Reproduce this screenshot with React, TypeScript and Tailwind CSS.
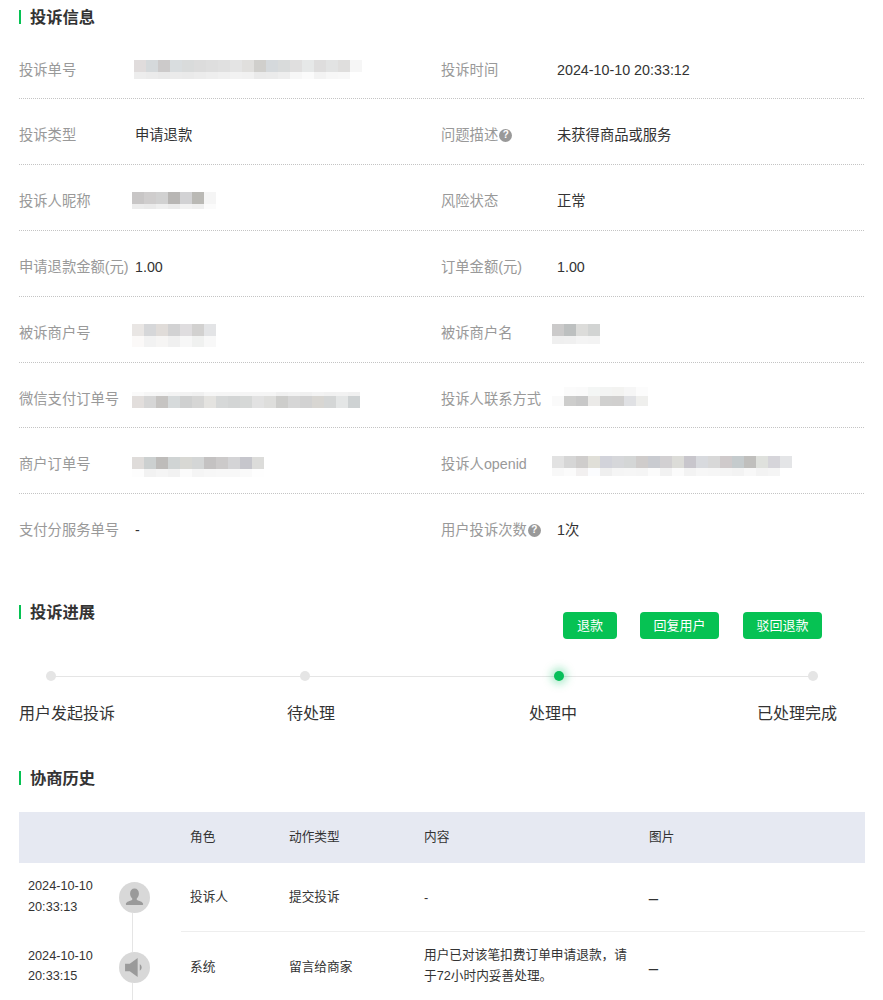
type MosaicData = {
  x: string;
  top: string[];
  bottom: string[];
  topH: string;
  bottomH: string;
};

const orderNo: MosaicData = {
  x: "-ml-px mt-0",
  topH: "h-3",
  bottomH: "h-[7px]",
  top: ["#e0dcdc", "#d5d9db", "#cccaca", "#d9dddf", "#d9dbdb", "#dcdcdc", "#dedede", "#e0e0e0", "#e4e4e4", "#e0dfdd", "#d0cfcc", "#d5d9dc", "#d9dbdb", "#e0dfdf", "#e6e8e8", "#dedddd", "#e2e3e3", "#dfdedd", "#f6f6f6"],
  bottom: ["#ededed", "#ebebeb", "#e9e9e9", "#ebebeb", "#eaeaea", "#ececec", "#eeeeee", "#f0f0f0", "#f2f2f2", "#f1f1f1", "#eaeaea", "#ebebeb", "#eeeeee", "#f7f7f7", "#fbfbfb", "#f3f3f3", "#f7f7f7", "#f8f8f8", "#ffffff"],
};
const nickname: MosaicData = {
  x: "-ml-[3px] mt-px",
  topH: "h-3",
  bottomH: "h-[5px]",
  top: ["#c8c6c6", "#cfcdcd", "#d1d1d1", "#b8b6b4", "#d2d2d4", "#bab9b5", "#f5f5f5"],
  bottom: ["#ececec", "#eaeaea", "#efefef", "#ebebeb", "#f2f2f2", "#efefef", "#fbfbfb"],
};
const merchantNo: MosaicData = {
  x: "-ml-[3px] mt-px",
  topH: "h-3",
  bottomH: "h-[11px]",
  top: ["#e9e6e4", "#d6d7d9", "#e0dcd9", "#d2d2d3", "#dfdddf", "#d2d1d0", "#e3e4e6"],
  bottom: ["#fbf9f8", "#f2f2f2", "#f6f5f4", "#f0f0f0", "#f7f7f7", "#f0f1f0", "#f8f8f8"],
};
const merchantName: MosaicData = {
  x: "-ml-[5px] mt-px",
  topH: "h-3",
  bottomH: "h-2",
  top: ["#cbcaca", "#bdc0c0", "#dcdcda", "#d2d4d3"],
  bottom: ["#efefef", "#f0f0f0", "#f4f4f4", "#f3f3f3"],
};
const wechatOrder: MosaicData = {
  x: "-ml-[3px] mt-[3px]",
  topH: "h-1",
  bottomH: "h-3",
  top: ["#fafafa", "#f6f6f6", "#f5f5f5", "#f3f3f3", "#f2f2f2", "#f0f0f0", "#f6f6f6", "#f5f5f5", "#f5f5f5", "#f5f5f5", "#f5f5f5", "#f5f5f5", "#f0f0f0", "#f2f2f2", "#f0f0f0", "#f3f3f3", "#f1f1f1", "#f2f2f2", "#f0f0f0"],
  bottom: ["#e2dedc", "#d6d6d6", "#c6c4c2", "#d6dadb", "#cfd0d0", "#d6d6d5", "#e4e3e0", "#d6d8d8", "#d3d5d5", "#d6d8d7", "#e2e2e2", "#dededc", "#cdcdcb", "#d6d6d6", "#d2d2d2", "#d8d6d2", "#d4d6d6", "#e4e6e6", "#ced2d3"],
};
const contact: MosaicData = {
  x: "-ml-[5px] -mt-0.5",
  topH: "h-[9px]",
  bottomH: "h-2.5",
  top: ["#ffffff", "#fbfbfb", "#fafafa", "#f4f6f5", "#f3f4f3", "#f3f3f1", "#f6f6f6", "#fcfcfc"],
  bottom: ["#fafafa", "#cdcdcc", "#c8c8c8", "#ebeae8", "#d0d0cf", "#d0cfce", "#e0e1e4", "#efefed"],
};
const merchantOrder: MosaicData = {
  x: "-ml-[3px] mt-[3px]",
  topH: "h-3",
  bottomH: "h-2",
  top: ["#dfdcda", "#ccd0d0", "#bebcba", "#d0d4d4", "#d8d8d4", "#d4d6d6", "#c4c2c2", "#cccaca", "#d4d4d6", "#c6c6cc", "#dcdcda"],
  bottom: ["#fdfdfd", "#f2f2f2", "#f5f5f5", "#f2f2f2", "#fbfbfb", "#f5f5f5", "#f7f7f7", "#f8f8f8", "#f8f8f8", "#fafafa", "#fefefe"],
};
const openid: MosaicData = {
  x: "-ml-[5px] mt-0.5",
  topH: "h-3",
  bottomH: "h-2",
  top: ["#e2e2e2", "#d6d6d6", "#cfcdcc", "#e0dfd8", "#d2d3da", "#d6d7da", "#d4d6d6", "#cfcccb", "#c9cbd0", "#d2d0d2", "#dcdcd8", "#c8c6cc", "#d8dade", "#d8d8d8", "#cfcacb", "#c5cbcd", "#c0bfbd", "#dfe1dd", "#d6d5da", "#e4e5e7"],
  bottom: ["#f8f8f8", "#fbfbfb", "#f2f0f0", "#fbfcfe", "#efefef", "#f5f5f5", "#f6f6f6", "#f5f5f5", "#fbfbfb", "#f2f2f2", "#fbfbfb", "#f3f3f3", "#f7f7f7", "#f6f6f6", "#f5f5f5", "#f3f3f3", "#f8f8f8", "#f3f3f3", "#f5f5f5", "#ffffff"],
};

function Mosaic({ data }: { data: MosaicData }) {
  return (
    <div className={data.x}>
      <div className={`flex ${data.topH}`}>
        {data.top.map((c, i) => (
          <div key={i} className="w-3 shrink-0" style={{ backgroundColor: c }} />
        ))}
      </div>
      <div className={`flex ${data.bottomH}`}>
        {data.bottom.map((c, i) => (
          <div key={i} className="w-3 shrink-0" style={{ backgroundColor: c }} />
        ))}
      </div>
    </div>
  );
}

function Title({ children }: { children: string }) {
  return (
    <h2 className="flex items-center h-5 text-[16.3px] font-bold text-[#333]">
      <span className="w-0.5 h-[14px] bg-[#06c253] mr-[9px]" />
      {children}
    </h2>
  );
}

function Help() {
  return (
    <span className="ml-px inline-flex items-center justify-center w-[13px] h-[13px] rounded-full bg-[#999] text-white text-[10px] font-bold leading-none">
      ?
    </span>
  );
}

function Cell({
  label,
  help,
  value,
  mosaic,
  wide,
}: {
  label: string;
  help?: boolean;
  value?: string;
  mosaic?: MosaicData;
  wide?: boolean;
}) {
  return (
    <div className={`flex items-start ${wide ? "w-[422px]" : "flex-1"}`}>
      <div className="flex items-center h-5 leading-5 w-[116px] shrink-0 text-[#999]">
        {label}
        {help && <Help />}
      </div>
      {mosaic ? <Mosaic data={mosaic} /> : <div className="h-5 leading-5 text-[#333]">{value}</div>}
    </div>
  );
}

function InfoRow({
  children,
  first,
  last,
  short,
}: {
  children: React.ReactNode;
  first?: boolean;
  last?: boolean;
  short?: boolean;
}) {
  return (
    <div
      className={`flex mr-[19px] ${first ? "pt-[27px]" : "pt-[26px]"} ${short ? "h-[65px]" : "h-[66px]"} ${
        last ? "" : "border-b border-dotted border-[#c4c4c4]"
      }`}
    >
      {children}
    </div>
  );
}

const steps = [
  { name: "用户发起投诉", gap: "" },
  { name: "待处理", gap: "ml-[172px]" },
  { name: "处理中", gap: "ml-[194px]" },
  { name: "已处理完成", gap: "ml-[180px]" },
];

function Stepper() {
  return (
    <div className="mt-[31px] text-[16px] text-[#333]">
      <div className="flex items-center justify-between h-3 ml-[27px] mr-[65px] bg-[linear-gradient(#e5e5e5,#e5e5e5)] bg-center bg-no-repeat bg-[length:100%_1px]">
        <span className="w-[10px] h-[10px] rounded-full bg-[#e5e5e5]" />
        <span className="w-[10px] h-[10px] rounded-full bg-[#e5e5e5]" />
        <span className="w-[10px] h-[10px] rounded-full bg-[#07bf5a] shadow-[0_0_8px_3px_rgba(7,193,96,0.35)]" />
        <span className="w-[10px] h-[10px] rounded-full bg-[#e5e5e5]" />
      </div>
      <div className="flex mt-[20px] leading-6">
        {steps.map((s) => (
          <span key={s.name} className={`shrink-0 whitespace-nowrap ${s.gap}`}>
            {s.name}
          </span>
        ))}
      </div>
    </div>
  );
}

function UserIcon() {
  return (
    <svg viewBox="0 0 20 20" className="w-[21px] h-[21px] fill-[#9a9a9a]">
      <path d="M10 1.5c-2.6 0-4.2 2-4.2 4.6 0 1.9.8 3.6 2 4.7v1.5c-2.1.8-5.5 1.5-6 3.7-.2.7.3 1.2.9 1.2h14.6c.6 0 1.1-.5.9-1.2-.5-2.2-3.9-2.9-6-3.7v-1.5c1.2-1.1 2-2.8 2-4.7 0-2.6-1.6-4.6-4.2-4.6z" />
    </svg>
  );
}

function SpeakerIcon() {
  return (
    <svg viewBox="0 0 20 20" className="w-[21px] h-[21px] fill-[#9a9a9a]">
      <path d="M1 6.5h4.5L13 1v18l-7.5-5.5H1z" />
      <path d="M15 7c1.2.6 1.8 1.7 1.8 3s-.6 2.4-1.8 3z" />
    </svg>
  );
}

function HistoryRow({
  date,
  time,
  icon,
  role,
  action,
  content,
  first,
}: {
  date: string;
  time: string;
  icon: React.ReactNode;
  role: string;
  action: string;
  content: React.ReactNode;
  first?: boolean;
}) {
  return (
    <div className={`flex ${first ? "h-[69px]" : "h-[100px]"}`}>
      <div className="flex w-[162px] shrink-0 pl-[9px]">
        <div className={`w-[90px] leading-[21px] ${first ? "pt-[13px]" : "pt-[14px]"}`}>
          <div>{date}</div>
          <div className={first ? "" : "-mt-px"}>{time}</div>
        </div>
        <div className="flex flex-col items-center w-[32px]">
          {first ? (
            <div className="h-[19px] shrink-0" />
          ) : (
            <div className="w-px h-[20px] shrink-0 bg-[#e5e5e5] mr-[3px]" />
          )}
          <div className="flex items-center justify-center w-[31px] h-[31px] rounded-full bg-[#d8d8d8] shrink-0">
            {icon}
          </div>
          <div className="w-px flex-1 bg-[#e5e5e5] mr-[3px]" />
        </div>
      </div>
      <div className={`flex flex-1 pl-[9px] items-start ${first ? "border-b border-[#eee]" : ""}`}>
        <div className={`w-[99px] leading-5 ${first ? "pt-[24px]" : "pt-[25px]"}`}>{role}</div>
        <div className={`w-[135px] leading-5 ${first ? "pt-[24px]" : "pt-[25px]"}`}>{action}</div>
        <div className="w-[225px] pt-[13px] leading-[21px]">{content}</div>
        <div className={`text-base leading-5 ${first ? "pt-[19px]" : "pt-[20px]"}`}>_</div>
      </div>
    </div>
  );
}

export default function App() {
  return (
    <div
      className="w-[883px] h-[1000px] overflow-hidden bg-white pt-[7px] pl-[19px] text-[14.3px] text-[#333]"
      style={{ fontFamily: '"Liberation Sans", "Noto Sans CJK SC", sans-serif' }}
    >
      <Title>投诉信息</Title>
      <div className="mt-[6px]">
        <InfoRow first>
          <Cell wide label="投诉单号" mosaic={orderNo} />
          <Cell label="投诉时间" value="2024-10-10 20:33:12" />
        </InfoRow>
        <InfoRow>
          <Cell wide label="投诉类型" value="申请退款" />
          <Cell label="问题描述" help value="未获得商品或服务" />
        </InfoRow>
        <InfoRow>
          <Cell wide label="投诉人昵称" mosaic={nickname} />
          <Cell label="风险状态" value="正常" />
        </InfoRow>
        <InfoRow>
          <Cell wide label="申请退款金额(元)" value="1.00" />
          <Cell label="订单金额(元)" value="1.00" />
        </InfoRow>
        <InfoRow>
          <Cell wide label="被诉商户号" mosaic={merchantNo} />
          <Cell label="被诉商户名" mosaic={merchantName} />
        </InfoRow>
        <InfoRow short>
          <Cell wide label="微信支付订单号" mosaic={wechatOrder} />
          <Cell label="投诉人联系方式" mosaic={contact} />
        </InfoRow>
        <InfoRow>
          <Cell wide label="商户订单号" mosaic={merchantOrder} />
          <Cell label="投诉人openid" mosaic={openid} />
        </InfoRow>
        <InfoRow last>
          <Cell wide label="支付分服务单号" value="-" />
          <Cell label="用户投诉次数" help value="1次" />
        </InfoRow>
      </div>

      {/* 投诉进展 */}
      <div className="flex items-start mt-[37px] pr-[61px]">
        <div className="pt-[5px]">
          <Title>投诉进展</Title>
        </div>
        <div className="flex ml-auto mt-[15px] text-[13px]">
          <button className="w-[54px] h-[27px] mr-[23px] rounded-sm bg-[#06c253] text-white">退款</button>
          <button className="w-[79px] h-[27px] mr-[24px] rounded-sm bg-[#06c253] text-white">回复用户</button>
          <button className="w-[79px] h-[27px] rounded-sm bg-[#06c253] text-white">驳回退款</button>
        </div>
      </div>
      <Stepper />

      {/* 协商历史 */}
      <div className="mt-[42px]">
        <Title>协商历史</Title>
      </div>
      <div className="mt-6 w-[846px] text-[12.7px] text-[#333]">
        <div className="flex items-center h-[51px] bg-[#e6e9f2] pl-[171px]">
          <span className="w-[99px]">角色</span>
          <span className="w-[135px]">动作类型</span>
          <span className="w-[225px]">内容</span>
          <span>图片</span>
        </div>
        <HistoryRow
          first
          date="2024-10-10"
          time="20:33:13"
          icon={<UserIcon />}
          role="投诉人"
          action="提交投诉"
          content={<div className="pt-[12px]">-</div>}
        />
        <HistoryRow
          date="2024-10-10"
          time="20:33:15"
          icon={<SpeakerIcon />}
          role="系统"
          action="留言给商家"
          content={
            <>
              用户已对该笔扣费订单申请退款，请
              <br />
              于72小时内妥善处理。
            </>
          }
        />
      </div>
    </div>
  );
}
